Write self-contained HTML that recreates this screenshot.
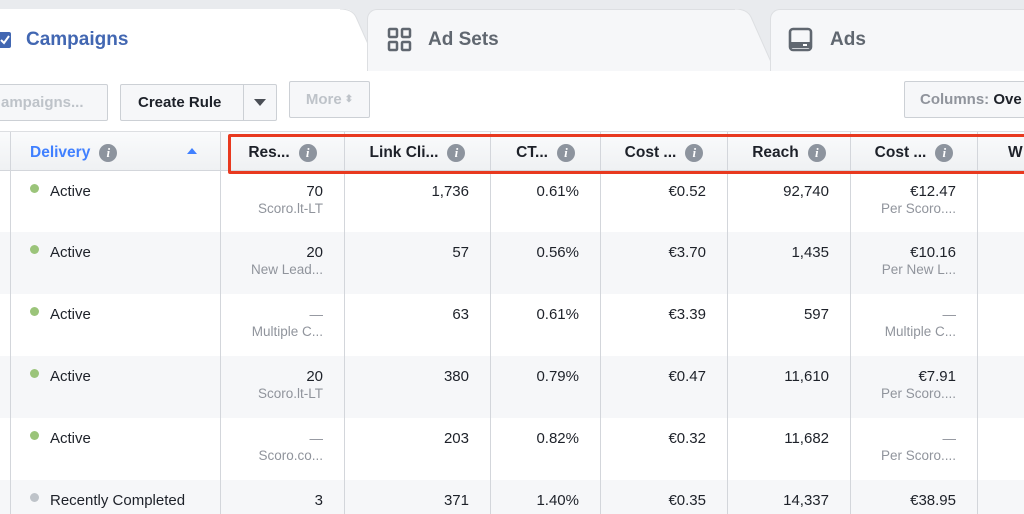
<!DOCTYPE html>
<html><head><meta charset="utf-8"><style>
*{margin:0;padding:0;box-sizing:border-box}
html,body{width:1024px;height:514px;overflow:hidden}
body{background:#fff;font-family:"Liberation Sans",Arial,sans-serif;position:relative;color:#1d2129}
.a{position:absolute}
.tabbar{left:0;top:0;width:1024px;height:71px;background:#e9ebee;border-bottom:1px solid #dddfe2}
.tab{top:9px;height:62px;font-size:19px;font-weight:bold;color:#606770;display:flex;align-items:center}
.row{position:absolute;left:0;width:1024px;height:62px;display:grid;grid-template-columns:11px 210px 124px 146px 110px 127px 123px 127px 46px}
.row>div{border-right:1px solid #d3d6db;text-align:right;padding-right:21px;padding-top:12px;font-size:15px;color:#1d2129;line-height:17px;white-space:nowrap;overflow:hidden}
.row>div:first-child{border-right:1px solid #d3d6db;padding:0}
.row>div:nth-child(2){text-align:left;padding-left:19px;padding-top:12px}
.row>div:last-child{border-right:none}
.s{font-size:13.5px;color:#90949c;line-height:17px}
.g{background:#f6f7f9}
.dot{display:inline-block;width:9px;height:9px;border-radius:50%;background:#9bc47a;margin-right:11px;vertical-align:3px}
.hdr{position:absolute;left:0;top:131px;width:1024px;height:40px;display:grid;grid-template-columns:11px 210px 124px 146px 110px 127px 123px 127px 46px;background:linear-gradient(#fafbfc,#eff1f3);border-top:1px solid #dddfe2;border-bottom:1px solid #d3d6db}
.hdr>div{border-right:1px solid #d3d6db;font-size:15.5px;font-weight:bold;display:flex;align-items:center;justify-content:center;white-space:nowrap;overflow:hidden;padding-top:3px}
.i{display:inline-block;width:18px;height:18px;border-radius:50%;background:#8d949e;color:#fff;font-size:13px;font-weight:bold;font-style:italic;text-align:center;line-height:18px;margin-left:9px;font-family:"Liberation Serif",serif}
.btn{border:1px solid #ccd0d5;border-radius:2px;background:#f6f7f9;font-size:15px;font-weight:bold;display:flex;align-items:center}
</style></head><body>
<div class="a tabbar"></div>
<div class="a" style="left:0;top:9px;width:355px;height:62px;background:#fff;border-radius:0 10px 0 0"></div>
<svg class="a" style="left:340px;top:9px" width="40" height="62"><path d="M0 0 Q12 0 16 8 L40 62 L0 62Z" fill="#fff"/><path d="M0 0 Q12 0 16 8 L40 62" fill="none" stroke="#dddfe2"/></svg>
<div class="a tab" style="left:0;color:#4267b2;width:200px"><svg width="12" height="18" style="margin-right:14px"><rect x="-6" y="1" width="17" height="16" rx="2" fill="#4267b2"/><path d="M1 9 L4 12 L9 5" fill="none" stroke="#fff" stroke-width="2"/></svg>Campaigns</div>
<div class="a" style="left:367px;top:9px;width:380px;height:62px;background:#f6f7f9;border:1px solid #dddfe2;border-bottom:none;border-radius:10px 10px 0 0"></div>
<svg class="a" style="left:735px;top:9px" width="45" height="62"><path d="M0 0 Q12 0 16 8 L40 62 L0 62Z" fill="#f6f7f9"/><path d="M0 0 Q12 0 16 8 L40 62" fill="none" stroke="#dddfe2"/></svg>
<div class="a tab" style="left:387px"><svg width="26" height="26" style="margin-right:15px"><g fill="none" stroke="#606770" stroke-width="2.5"><rect x="2" y="2" width="8" height="8" rx="1"/><rect x="15" y="2" width="8" height="8" rx="1"/><rect x="2" y="15" width="8" height="8" rx="1"/><rect x="15" y="15" width="8" height="8" rx="1"/></g></svg>Ad Sets</div>
<div class="a" style="left:770px;top:9px;width:260px;height:62px;background:#f6f7f9;border:1px solid #dddfe2;border-bottom:none;border-radius:10px 0 0 0"></div>
<div class="a tab" style="left:788px"><svg width="26" height="26" style="margin-right:16px"><rect x="2" y="2" width="21" height="21" rx="3" fill="none" stroke="#606770" stroke-width="2.6"/><rect x="3" y="15" width="19" height="6" fill="#606770"/><rect x="15" y="17" width="4" height="2" fill="#fff"/></svg>Ads</div>
<div class="a" style="left:0;top:71px;width:1024px;height:60px;background:#fff"></div>
<div class="a btn" style="left:-10px;top:84px;width:118px;height:37px;color:#bec3c9;background:#f6f7f9;padding-left:10px">ampaigns...</div>
<div class="a btn" style="left:120px;top:84px;width:157px;height:37px;color:#1d2129"><span style="padding-left:17px;width:124px">Create Rule</span><span style="border-left:1px solid #ccd0d5;height:35px;width:33px;display:flex;align-items:center;justify-content:center"><svg width="12" height="7"><path d="M0 0H12L6 7Z" fill="#4b4f56"/></svg></span></div>
<div class="a btn" style="left:289px;top:81px;width:81px;height:37px;color:#bec3c9;justify-content:center">More <span style="font-size:10px;margin-left:3px">⬍</span></div>
<div class="a btn" style="left:904px;top:81px;width:130px;height:37px;color:#90949c;padding-left:15px">Columns:&nbsp;<span style="color:#1d2129">Ove</span></div>
<div class="hdr">
<div></div>
<div style="justify-content:flex-start;padding-left:19px;color:#4080ff;position:relative">Delivery<span class="i">i</span><svg style="position:absolute;left:176px;top:16px" width="10" height="6"><path d="M0 6H10L5 0Z" fill="#4080ff"/></svg></div>
<div>Res...<span class="i">i</span></div>
<div>Link Cli...<span class="i">i</span></div>
<div>CT...<span class="i">i</span></div>
<div>Cost ...<span class="i">i</span></div>
<div>Reach<span class="i">i</span></div>
<div>Cost ...<span class="i">i</span></div>
<div style="justify-content:flex-start;padding-left:30px;border:none">W</div>
</div>
<div class="row" style="top:171px"><div></div><div><span class="dot"></span>Active</div><div>70<br><span class="s">Scoro.lt-LT</span></div><div>1,736</div><div>0.61%</div><div>€0.52</div><div>92,740</div><div>€12.47<br><span class="s">Per Scoro....</span></div><div></div></div>
<div class="row g" style="top:232px"><div></div><div><span class="dot"></span>Active</div><div>20<br><span class="s">New Lead...</span></div><div>57</div><div>0.56%</div><div>€3.70</div><div>1,435</div><div>€10.16<br><span class="s">Per New L...</span></div><div></div></div>
<div class="row" style="top:294px"><div></div><div><span class="dot"></span>Active</div><div><span class="s">—</span><br><span class="s">Multiple C...</span></div><div>63</div><div>0.61%</div><div>€3.39</div><div>597</div><div><span class="s">—</span><br><span class="s">Multiple C...</span></div><div></div></div>
<div class="row g" style="top:356px"><div></div><div><span class="dot"></span>Active</div><div>20<br><span class="s">Scoro.lt-LT</span></div><div>380</div><div>0.79%</div><div>€0.47</div><div>11,610</div><div>€7.91<br><span class="s">Per Scoro....</span></div><div></div></div>
<div class="row" style="top:418px"><div></div><div><span class="dot"></span>Active</div><div><span class="s">—</span><br><span class="s">Scoro.co...</span></div><div>203</div><div>0.82%</div><div>€0.32</div><div>11,682</div><div><span class="s">—</span><br><span class="s">Per Scoro....</span></div><div></div></div>
<div class="row g" style="top:480px;height:34px"><div></div><div><span class="dot" style="background:#bec3c9"></span>Recently Completed</div><div>3</div><div>371</div><div>1.40%</div><div>€0.35</div><div>14,337</div><div>€38.95</div><div></div></div>
<div class="a" style="left:228px;top:134px;width:800px;height:40px;border:3px solid #e8391f;border-radius:2px"></div>
</body></html>
